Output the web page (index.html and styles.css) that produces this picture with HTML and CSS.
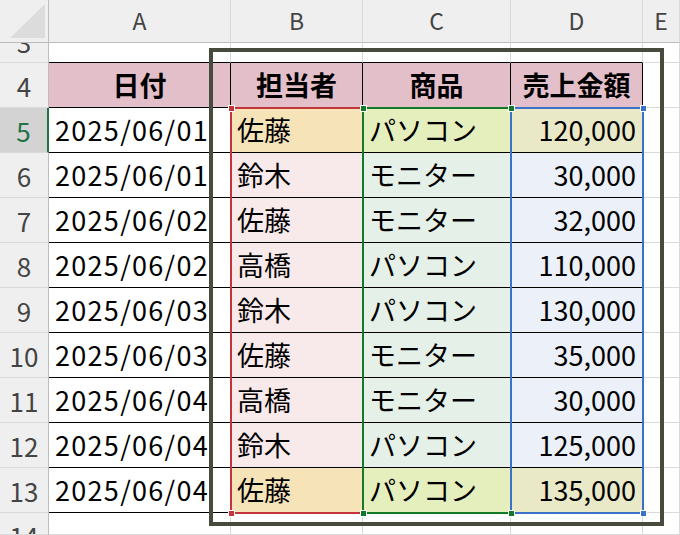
FILE: index.html
```html
<!DOCTYPE html>
<html lang="ja">
<head>
    <meta charset="UTF-8">
    <title>売上表</title>
    <link rel="stylesheet" href="styles.css">
</head>
<body>
    <div class="wrap">
        <div class="sheet">
            <!-- column headers -->
            <div class="ch corner">
                <svg width="49" height="43" viewBox="0 0 49 43"><polygon points="10,38 45,38 45,4" fill="#dcdcdc"/></svg>
            </div>
            <div class="ch">A</div>
            <div class="ch">B</div>
            <div class="ch">C</div>
            <div class="ch">D</div>
            <div class="ch">E</div>

            <!-- row 3 (cut off) -->
            <div class="rh top-cut"><span>3</span></div>
            <div class="c above"></div>
            <div class="c above"></div>
            <div class="c above"></div>
            <div class="c above"></div>
            <div class="c"></div>

            <!-- row 4 -->
            <div class="rh">4</div>
            <div class="c t head">日付</div>
            <div class="c t head">担当者</div>
            <div class="c t head">商品</div>
            <div class="c t head">売上金額</div>
            <div class="c"></div>

            <div class="rh active">5</div>
            <div class="c t date">2025/06/01</div>
            <div class="c t name hl">佐藤</div>
            <div class="c t item hl">パソコン</div>
            <div class="c t num hl">120,000</div>
            <div class="c"></div>

            <div class="rh">6</div>
            <div class="c t date">2025/06/01</div>
            <div class="c t name">鈴木</div>
            <div class="c t item">モニター</div>
            <div class="c t num">30,000</div>
            <div class="c"></div>

            <div class="rh">7</div>
            <div class="c t date">2025/06/02</div>
            <div class="c t name">佐藤</div>
            <div class="c t item">モニター</div>
            <div class="c t num">32,000</div>
            <div class="c"></div>

            <div class="rh">8</div>
            <div class="c t date">2025/06/02</div>
            <div class="c t name">高橋</div>
            <div class="c t item">パソコン</div>
            <div class="c t num">110,000</div>
            <div class="c"></div>

            <div class="rh">9</div>
            <div class="c t date">2025/06/03</div>
            <div class="c t name">鈴木</div>
            <div class="c t item">パソコン</div>
            <div class="c t num">130,000</div>
            <div class="c"></div>

            <div class="rh">10</div>
            <div class="c t date">2025/06/03</div>
            <div class="c t name">佐藤</div>
            <div class="c t item">モニター</div>
            <div class="c t num">35,000</div>
            <div class="c"></div>

            <div class="rh">11</div>
            <div class="c t date">2025/06/04</div>
            <div class="c t name">高橋</div>
            <div class="c t item">モニター</div>
            <div class="c t num">30,000</div>
            <div class="c"></div>

            <div class="rh">12</div>
            <div class="c t date">2025/06/04</div>
            <div class="c t name">鈴木</div>
            <div class="c t item">パソコン</div>
            <div class="c t num">125,000</div>
            <div class="c"></div>

            <div class="rh">13</div>
            <div class="c t date">2025/06/04</div>
            <div class="c t name hl">佐藤</div>
            <div class="c t item hl">パソコン</div>
            <div class="c t num hl">135,000</div>
            <div class="c"></div>

            <!-- row 14 (cut off) -->
            <div class="rh bottom-cut"><span>14</span></div>
            <div class="c"></div>
            <div class="c"></div>
            <div class="c"></div>
            <div class="c"></div>
            <div class="c"></div>
        </div>

        <!-- formula reference ranges -->
        <div class="range range-b"></div>
        <div class="range range-c"></div>
        <div class="range range-d"></div>
        <span class="handle red" style="left: 228px; top: 105px;"></span>
        <span class="handle red" style="left: 228px; top: 510px;"></span>
        <span class="handle blue" style="left: 640px; top: 105px;"></span>
        <span class="handle blue" style="left: 640px; top: 510px;"></span>
        <span class="handle green" style="left: 360px; top: 105px;"></span>
        <span class="handle green" style="left: 360px; top: 510px;"></span>
        <span class="handle green" style="left: 508px; top: 105px;"></span>
        <span class="handle green" style="left: 508px; top: 510px;"></span>

        <!-- outline drawn around B:D -->
        <div class="frame"></div>
    </div>
</body>
</html>
```

FILE: styles.css
```css
* {
    box-sizing: border-box;
}
body {
    margin: 0;
    width: 680px;
    height: 535px;
    overflow: hidden;
    background: #fff;
    font-family: "Noto Sans CJK JP", "Noto Sans", sans-serif;
    color: #000;
}
.wrap {
    position: relative;
    width: 680px;
    height: 535px;
    overflow: hidden;
}
.sheet {
    display: grid;
    grid-template-columns: 49px 182px 132px 148px 132px 37px;
    grid-template-rows: 43px 20px repeat(10, 45px) 22px;
}

/* headers */
.ch {
    background: #efefef;
    border-right: 1px solid #dadada;
    border-bottom: 1px solid #bdbdbd;
    display: flex;
    align-items: center;
    justify-content: center;
    font-size: 23px;
    color: #444;
    padding-bottom: 2px;
}
.ch.corner {
    display: block;
    padding: 0;
    border-right-color: #bdbdbd;
}
.rh {
    background: #efefef;
    border-right: 1px solid #bdbdbd;
    border-bottom: 1px solid #dadada;
    display: flex;
    align-items: center;
    justify-content: center;
    font-size: 26px;
    color: #444;
    overflow: hidden;
}
.rh.active {
    background: #d3d3d3;
    color: #217346;
    border-right: 2px solid #217346;
}
.rh.top-cut {
    align-items: flex-end;
}
.rh.top-cut span,
.rh.bottom-cut span {
    display: block;
    line-height: 45px;
    height: 45px;
    flex-shrink: 0;
}
.rh.top-cut span {
    margin-bottom: -2px;
}
.rh.bottom-cut {
    align-items: flex-start;
}

/* cells */
.c {
    background: #fff;
    border-right: 1px solid #dadada;
    border-bottom: 1px solid #dadada;
    display: flex;
    align-items: center;
    font-size: 27px;
    white-space: nowrap;
    overflow: hidden;
}
.c.above {
    border-bottom-color: #000;
}
.c.t {
    border-right-color: #000;
    border-bottom-color: #000;
    padding: 0 6px 2px;
}
.head {
    background: #e3bfca;
    font-weight: bold;
    justify-content: center;
}
.date {
    letter-spacing: 1.3px;
}
.name {
    background: #f8e9ea;
}
.name.hl {
    background: #f6e3b8;
}
.item {
    background: #e5f0e8;
}
.item.hl {
    background: #e5efbd;
}
.num {
    background: #ebf0f9;
    justify-content: flex-end;
}
.num.hl {
    background: #e9e9c8;
}

/* overlays */
.range {
    position: absolute;
    top: 107px;
    height: 407px;
    border: 2px solid;
}
.range-b {
    left: 230px;
    width: 134px;
    border-color: #c4343c;
}
.range-c {
    left: 362px;
    width: 150px;
    border-color: #137a2a;
}
.range-d {
    left: 510px;
    width: 134px;
    border-color: #3b72c9;
}
.handle {
    position: absolute;
    width: 7px;
    height: 7px;
    border: 1px solid #fff;
}
.handle.red {
    background: #c4343c;
}
.handle.green {
    background: #137a2a;
}
.handle.blue {
    background: #3b72c9;
}
.frame {
    position: absolute;
    left: 209px;
    top: 48px;
    width: 455px;
    height: 478px;
    border: 4px solid #464b3e;
}
```
